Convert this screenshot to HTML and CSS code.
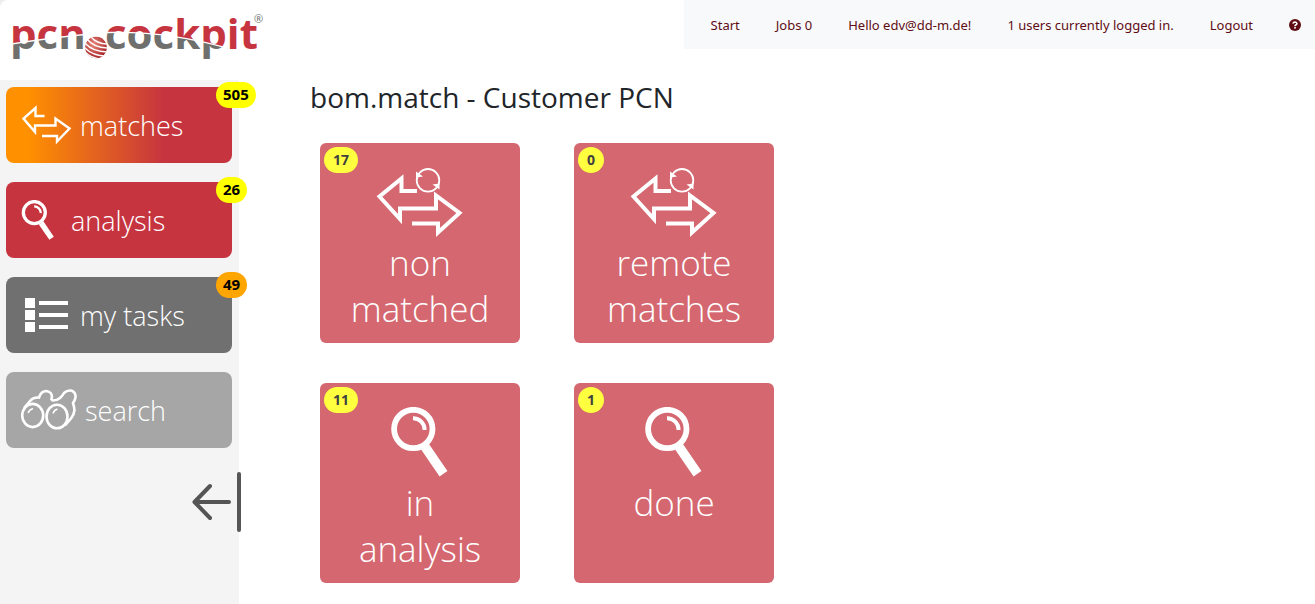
FILE: index.html
```html
<!DOCTYPE html>
<html lang="en">
	<head>
		<meta charset="utf-8">
		<meta name="viewport" content="width=device-width, initial-scale=1">
		<title>pcn.cockpit</title>
		<link rel="stylesheet" href="styles.css">
	</head>
	<body>
	<!--shared icons-->
	<svg class="symbols" aria-hidden="true">
		<symbol id="lens" viewBox="0 0 60 70">
			<g fill="none" stroke="#fff">
				<circle cx="23.3" cy="22" r="19.2" stroke-width="5.8"/>
				<path d="M35.2 40L53.5 66.8" stroke-width="9.5"/>
				<path d="M23 11.3A11.5 11.5 0 0 1 34.6 23" stroke-width="4"/>
			</g>
		</symbol>
		<symbol id="match" viewBox="0 0 88 70">
			<path d="M41 24H25.5V11.5L3.5 29.5L24 52V41.5H60V28.5L83.5 46L62 65.5V56.5H36" fill="none" stroke="#fff" stroke-width="4"/>
			<circle cx="52" cy="13.3" r="11.3" fill="none" stroke="#fff" stroke-width="1.8"/>
			<path d="M40 4.5L47 9.5L40 10.5ZM56.5 17.5L63.5 16.5L63.5 22.5Z" fill="#fff"/>
		</symbol>
	</svg>
	<header class="head">
		<a class="logo" href="#" aria-label="pcn.cockpit">
			<svg width="264" height="80" viewBox="0 0 264 80">
				<defs>
					<pattern id="split" patternUnits="userSpaceOnUse" width="264" height="80">
						<rect width="264" height="80" fill="#c6343f"/>
						<path d="M0 46Q50 37 108 32.5Q170 31 230 49V80H0Z" fill="#6f6f6d"/>
						<path d="M0 46Q50 37 108 32.5Q170 31 230 49" fill="none" stroke="#fff" stroke-width="1.4"/>
						<rect x="225" width="39" height="80" fill="#c6343f"/>
					</pattern>
					<radialGradient id="ball" cx="0.4" cy="0.35" r="0.7">
						<stop offset="0" stop-color="#e8887c"/>
						<stop offset="1" stop-color="#a51e22"/>
					</radialGradient>
					<clipPath id="ball_clip"><circle cx="96" cy="47.5" r="11"/></clipPath>
				</defs>
				<text class="logo_text" x="10" y="49" fill="url(#split)">pcn</text>
				<text class="logo_text" x="105" y="49" fill="url(#split)">cockpit</text>
				<g clip-path="url(#ball_clip)">
					<circle cx="96" cy="47.5" r="11" fill="url(#ball)"/>
					<g fill="none" stroke="#fff" stroke-width="1.4">
						<path d="M91 37Q97 44 108 44"/>
						<path d="M87 39Q94 48 108 48"/>
						<path d="M84 42Q92 52 108 52"/>
						<path d="M84 47Q92 56 106 56"/>
						<path d="M84 51Q91 59 102 59"/>
					</g>
				</g>
				<text class="logo_reg" x="254" y="23">®</text>
			</svg>
		</a>
		<nav class="nav">
			<a href="#">Start</a>
			<a href="#">Jobs 0</a>
			<a href="#">Hello edv@dd-m.de!</a>
			<a href="#">1 users currently logged in.</a>
			<a href="#">Logout</a>
			<a class="help" href="#" aria-label="Help">
				<svg width="12" height="12" viewBox="0 0 12 12">
					<circle cx="6" cy="6" r="6" fill="#5f0d14"/>
					<path d="M4 4.6Q4.2 3 6 3Q7.9 3.1 7.9 4.6Q7.8 5.5 6.7 6Q6 6.3 6 7.2" fill="none" stroke="#fff" stroke-width="1.6"/>
					<rect x="5.2" y="8" width="1.6" height="1.6" fill="#fff"/>
				</svg>
			</a>
		</nav>
	</header>
	<div class="con">
		<aside class="side">
			<!--menu-->
			<ul class="menu">
				<li>
					<a class="item matches" href="#">
						<svg width="51" height="42" viewBox="0 0 51 42">
							<path d="M23.5 12H14.5V4L2.5 14.5L14 28V21.5H34.5V14.5L48.5 24.5L36 37.5V32H21" fill="none" stroke="#fff" stroke-width="2.4"/>
						</svg>
						<span>matches</span>
					</a>
					<b class="badge">505</b>
				</li>
				<li>
					<a class="item analysis" href="#">
						<svg width="42" height="40" preserveAspectRatio="xMinYMid" viewBox="0 0 60 70"><use href="#lens" width="60" height="70"/></svg>
						<span>analysis</span>
					</a>
					<b class="badge">26</b>
				</li>
				<li>
					<a class="item tasks" href="#">
						<svg width="51" height="40" viewBox="0 0 51 40">
							<path d="M4 3h10v10h-10zM4 15h10v10h-10zM4 27h10v10h-10zM18 6h29v4h-29zM18 18h29v4h-29zM18 30h29v4h-29z" fill="#fff"/>
						</svg>
						<span>my tasks</span>
					</a>
					<b class="badge orange">49</b>
				</li>
				<li>
					<a class="item search" href="#">
						<svg width="56" height="42" viewBox="0 0 56 42">
							<g fill="none" stroke="#fff" stroke-width="2.6">
								<ellipse cx="11.7" cy="26.5" rx="10.5" ry="11.6"/>
								<ellipse cx="36" cy="27.5" rx="10.5" ry="11.8"/>
								<path d="M3 19L9.5 11.5Q12 8 18 8.5Q20 2 25.5 2Q31 3 31 8Q29.5 11 32 11.5Q36 11.5 39 9Q42 6 43 4Q46 1 50 1.5Q55 3 54.5 8.5Q54 11 52 14Q53 17 53.5 21Q53 26 50 29.5L44 36.5"/>
								<path d="M7 24Q8.5 20.5 12 19.5M32 24.5Q33 21 36.5 20" stroke-width="1.5"/>
							</g>
						</svg>
						<span>search</span>
					</a>
				</li>
			</ul>
			<button class="fold" type="button" aria-label="Collapse menu">
				<svg width="50" height="60" viewBox="0 0 50 60">
					<path d="M18 14L2.5 30L18 46M3 30H37M47 2V58" fill="none" stroke="#555" stroke-width="4" stroke-linecap="round" stroke-linejoin="round"/>
				</svg>
			</button>
		</aside>
		<main class="main">
			<h1>bom.match - Customer PCN</h1>
			<!--tiles-->
			<div class="tiles">
				<a class="tile" href="#">
					<b class="badge">17</b>
					<svg width="88" height="70"><use href="#match"/></svg>
					<span>non matched</span>
				</a>
				<a class="tile" href="#">
					<b class="badge">0</b>
					<svg width="88" height="70"><use href="#match"/></svg>
					<span>remote matches</span>
				</a>
				<a class="tile" href="#">
					<b class="badge">11</b>
					<svg width="60" height="70"><use href="#lens"/></svg>
					<span>in<br>analysis</span>
				</a>
				<a class="tile" href="#">
					<b class="badge">1</b>
					<svg width="60" height="70"><use href="#lens"/></svg>
					<span>done</span>
				</a>
			</div>
		</main>
	</div>
	</body>
</html>
```
FILE: styles.css
```css
*{margin:0;padding:0;box-sizing:border-box;list-style:none;}
html{background:#eee;}
body{min-height:100vh;display:flex;flex-direction:column;background:#fff;border-top-left-radius:8px;font-family:"Segoe UI","Open Sans","Noto Sans",sans-serif;color:#212529;}
a{text-decoration:none;}
svg{display:block;flex:none;}
.symbols{position:absolute;width:0;height:0;}
/*header*/
.head{display:flex;justify-content:space-between;align-items:flex-start;}
.logo_text{font-size:42px;font-weight:700;}
.logo_reg{font-size:11px;fill:#6f6f6d;}
.nav{display:flex;align-items:center;gap:36px;min-height:49px;padding:0 14px 0 27px;background:#f8f9fb;}
.nav a{font-family:"Segoe UI","Noto Sans",sans-serif;font-size:13px;line-height:20px;color:#5f0d14;}
/*menu*/
.con{flex:1;display:flex;}
.side{width:239px;flex:none;display:flex;flex-direction:column;padding:7px 7px 0 6px;background:#f4f4f4;}
.menu{display:flex;flex-direction:column;gap:19px;}
.menu li{position:relative;}
.item{display:flex;align-items:center;gap:8px;height:76px;padding:0 15px;border-radius:8px;font-size:27px;font-weight:300;color:#fff;}
.matches{background:linear-gradient(90deg,#ff9000 10%,#c6343f 70%);}
.analysis{background:#c6343f;}
.tasks{background:#707070;}
.search{background:#a6a6a6;}
.badge{position:absolute;height:26px;border-radius:13px;background:#ff0;font-size:14px;line-height:26px;font-weight:700;color:#000;}
.menu .badge{left:210px;top:-5px;padding:0 7px;font-size:15px;line-height:25px;}
.menu .orange{background:#ffa500;}
.fold{align-self:flex-end;margin:24px -10px 0 0;border:0;background:none;cursor:pointer;}
/*content*/
.main{flex:1;padding:0 71px;}
h1{font-size:28px;line-height:34px;font-weight:375;}
.tiles{display:grid;grid-template-columns:repeat(auto-fill,200px);gap:40px 54px;max-width:474px;margin:29px 10px 0;}
.tile{position:relative;display:flex;flex-direction:column;align-items:center;height:200px;padding-top:24px;border-radius:6px;background:#d4676f;font-size:35px;line-height:46px;font-weight:300;text-align:center;color:#fff;}
.tile span{width:150px;margin-top:3px;}
.tile .badge{left:4px;top:4px;padding:0 9px;background:#ffff40;color:#404040;}
```
